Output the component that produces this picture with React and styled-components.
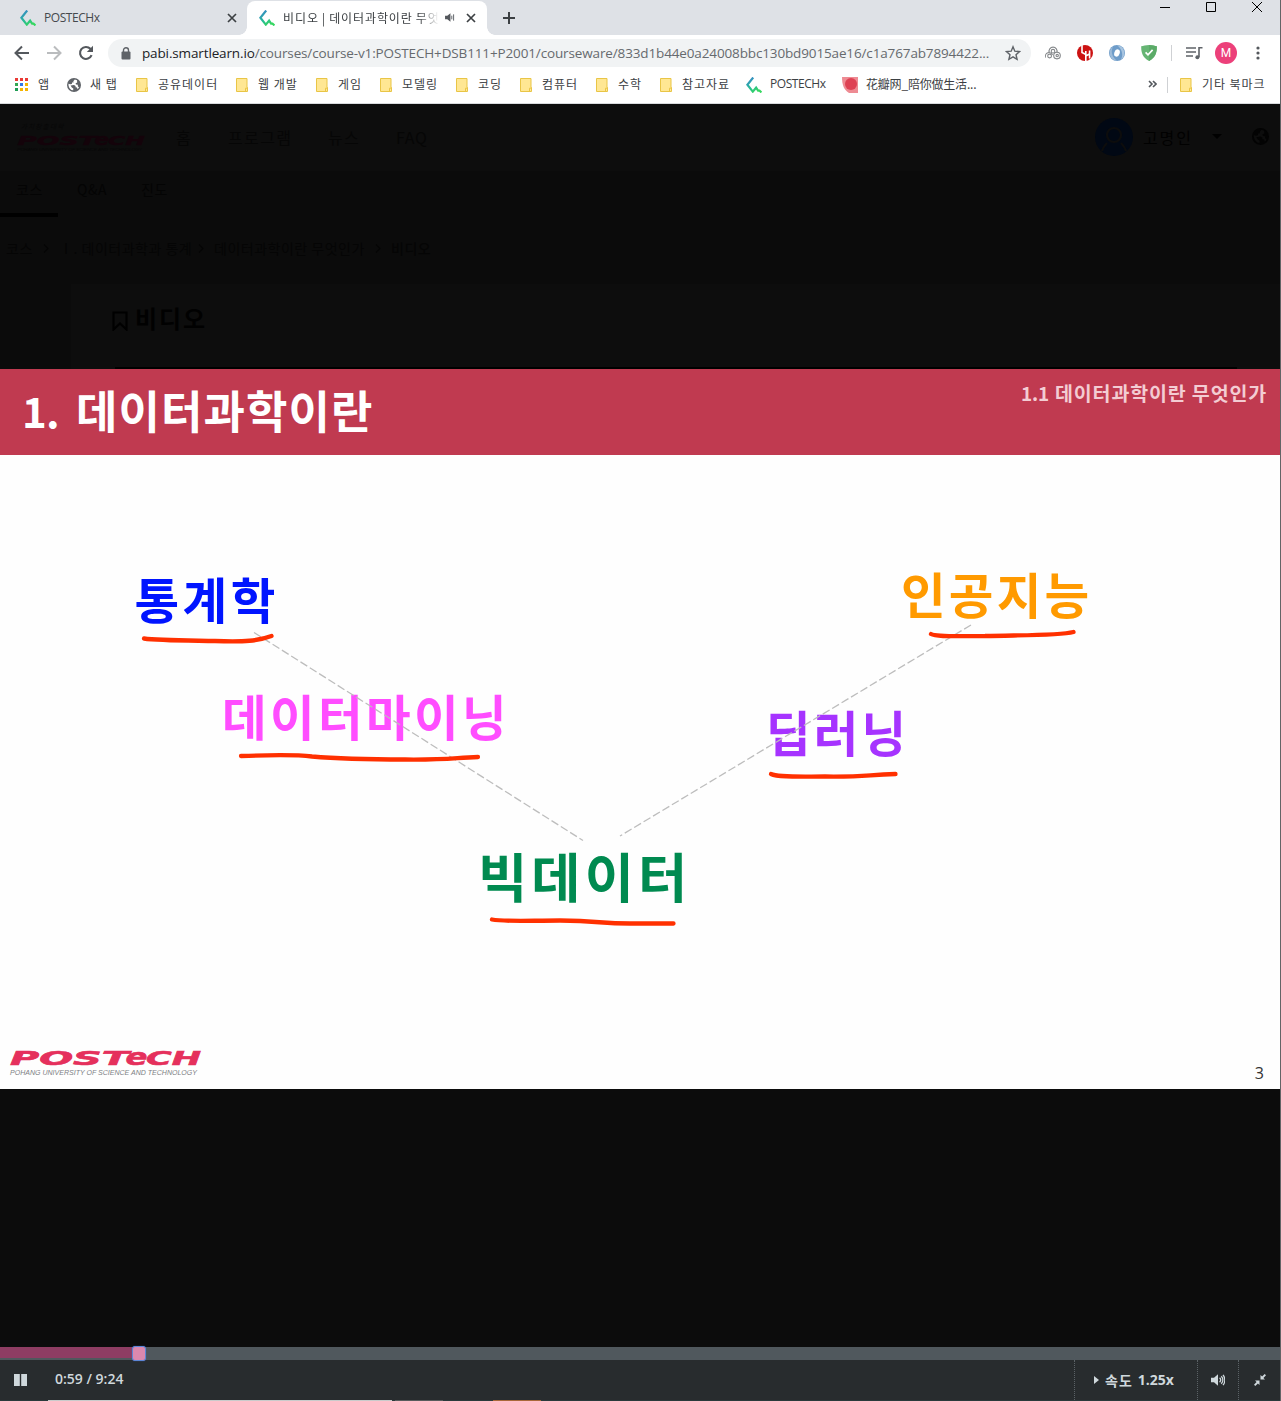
import React from "react";
import styled, { createGlobalStyle } from "styled-components";

const Global = createGlobalStyle`
  * { box-sizing: border-box; }
  body { margin: 0; background: #0c0c0c; overflow: hidden; }
`;

const UI_FONT = `"Open Sans", "Noto Sans", "Noto Sans CJK KR", "Noto Sans CJK SC", sans-serif`;
const KR_FONT = `"Noto Sans CJK KR", "Noto Sans CJK SC", sans-serif`;

const Window = styled.div`
  width: 1281px;
  height: 1401px;
  display: flex;
  flex-direction: column;
  border-right: 1px solid #636466;
  background: #0c0c0c;
  font-family: ${UI_FONT};
  overflow: hidden;
`;

/* ---------- tab strip ---------- */
const TabStrip = styled.div`
  height: 35px;
  flex: none;
  display: flex;
  background: #dee1e6;
`;
const Tab = styled.div`
  display: flex;
  align-items: center;
  position: relative;
  width: ${(p) => (p.$active ? 240 : 247)}px;
  height: ${(p) => (p.$active ? 34 : 35)}px;
  margin-top: ${(p) => (p.$active ? 1 : 0)}px;
  padding: ${(p) => (p.$active ? "0 11px 1px 12px" : "0 10px 0 20px")};
  background: ${(p) => (p.$active ? "#fff" : "transparent")};
  border-radius: 8px 8px 0 0;
  &::before, &::after {
    content: "";
    display: ${(p) => (p.$active ? "block" : "none")};
    position: absolute;
    bottom: 0;
    width: 8px;
    height: 8px;
  }
  &::before { left: -8px; background: radial-gradient(circle at 0 0, transparent 7.5px, #fff 8px); }
  &::after { right: -8px; background: radial-gradient(circle at 100% 0, transparent 7.5px, #fff 8px); }
`;
const TabTitle = styled.span`
  flex: 1;
  margin-left: 8px;
  white-space: nowrap;
  overflow: hidden;
  font: 12px/18px ${(p) => (p.$kr ? KR_FONT : UI_FONT)};
  letter-spacing: ${(p) => p.$ls || 0}px;
  word-spacing: ${(p) => (p.$kr ? -0.5 : 0)}px;
  color: ${(p) => (p.$kr ? "#3c4043" : "#45494d")};
  ${(p) => p.$kr && "mask-image: linear-gradient(90deg,#000 136px,transparent 156px);"}
`;
const TabIcons = styled.div`
  display: flex;
  align-items: center;
  gap: 11px;
  margin-left: 6px;
`;
const NewTab = styled.div`
  width: 44px;
  display: flex;
  align-items: center;
  justify-content: center;
`;
const WindowButtons = styled.div`
  margin-left: auto;
  display: flex;
  gap: 36px;
  padding: 2px 18px 0 0;
`;

/* ---------- toolbar ---------- */
const Toolbar = styled.div`
  height: 35px;
  flex: none;
  display: flex;
  align-items: center;
  background: #fff;
  padding: 1px 12px 0 14px;
`;
const NavButtons = styled.div`
  display: flex;
  gap: 16px;
  width: 94px;
`;
const Omnibox = styled.div`
  width: 923px;
  height: 28px;
  border-radius: 14px;
  background: #f1f3f4;
  display: flex;
  align-items: center;
  padding: 0 10px 0 13px;
`;
const Url = styled.div`
  flex: 1;
  width: 0;
  margin-left: 11px;
  font: 13.5px/20px ${UI_FONT};
  letter-spacing: ${(p) => p.$ls}px;
  color: #666a6e;
  white-space: nowrap;
  b { font-weight: 400; color: #202124; }
`;
const Extensions = styled.div`
  display: flex;
  align-items: center;
  margin-left: 14px;
  gap: 16px;
`;
const Rule = styled.i`
  width: 1px;
  height: 16px;
  background: #cfd1d4;
  margin: ${(p) => p.$m || "0"};
`;
const Avatar = styled.div`
  width: 22px;
  height: 22px;
  margin-left: -4px;
  border-radius: 50%;
  background: #ec407a;
  color: #fff;
  font: 12px/22px Roboto, sans-serif;
  text-align: center;
`;

/* ---------- bookmarks ---------- */
const Bookmarks = styled.div`
  height: 34px;
  flex: none;
  display: flex;
  align-items: center;
  background: #fff;
  border-bottom: 1px solid #d8dadd;
  padding: 0 0 6px 14px;
`;
const Bookmark = styled.div`
  width: ${(p) => p.$w}px;
  flex: none;
  display: flex;
  align-items: center;
  font: 12px/18px ${(p) => (p.$latin ? UI_FONT : KR_FONT)};
  letter-spacing: ${(p) => p.$ls ?? 1}px;
  color: #3c4043;
  white-space: nowrap;
  svg { flex: none; margin-top: 2px; margin-right: ${(p) => p.$gap ?? 10}px; }
`;
const More = styled.div`
  margin-left: auto;
  display: flex;
  align-items: center;
`;

/* ---------- dimmed page ---------- */
const Dimmed = styled.div`
  height: 265px;
  flex: none;
  display: flex;
  flex-direction: column;
  background: #0b0b0b;
  font-family: ${KR_FONT};
  color: #060606;
`;
const SiteNav = styled.div`
  height: 67px;
  display: flex;
  align-items: center;
  background: #0d0d0d;
  padding: 0 11px 2px 16px;
  font-size: 16px;
`;
const SiteLogo = styled.div`
  width: 160px;
  padding-top: 22px;
`;
const NavLink = styled.span`
  width: ${(p) => p.$w}px;
  white-space: nowrap;
  letter-spacing: ${(p) => p.$ls ?? 1.4}px;
`;
const Account = styled.div`
  margin-left: auto;
  display: flex;
  align-items: center;
  color: #010101;
  > svg:nth-of-type(2) { margin-right: 30px; }
`;
const AccountName = styled.span`
  width: 79px;
  padding-left: 10px;
  letter-spacing: 1.9px;
`;
const CourseTabs = styled.div`
  height: 46px;
  display: flex;
  font-size: 14px;
`;
const CourseTab = styled.div`
  width: ${(p) => p.$w}px;
  height: 46px;
  padding: 8px 0 0 ${(p) => p.$pl}px;
  border-bottom: ${(p) => (p.$on ? "4px solid #000" : "0")};
  letter-spacing: 0.5px;
  white-space: nowrap;
  color: #040404;
`;
const Crumbs = styled.div`
  height: 67px;
  display: flex;
  align-items: center;
  padding: 0 0 5px 6px;
  font-size: 14px;
  letter-spacing: 0.5px;
  white-space: nowrap;
  color: #050505;
`;
const Crumb = styled.span`
  width: ${(p) => p.$w}px;
  font-weight: ${(p) => (p.$b ? 500 : 400)};
  display: flex;
  align-items: center;
  justify-content: space-between;
  svg { margin-right: 10px; }
`;
const Card = styled.div`
  flex: 1;
  margin-left: 71px;
  background: #0d0d0d;
  padding: 18px 43px 0 40px;
  display: flex;
  flex-direction: column;
  justify-content: space-between;
`;
const CardTitle = styled.div`
  display: flex;
  align-items: center;
  gap: 6px;
  font: 700 24px/32px ${KR_FONT};
  letter-spacing: 1.9px;
  color: #010101;
  svg { margin-top: 6px; }
`;
const VideoEdge = styled.div`
  height: 2px;
  margin-left: 4px;
  background: #000;
`;

/* ---------- slide ---------- */
const Slide = styled.div`
  height: 720px;
  flex: none;
  position: relative;
  background: #fefefe;
  font-family: ${KR_FONT};
`;
const SlideHeader = styled.div`
  height: 86px;
  background: #c03a50;
  display: flex;
  justify-content: space-between;
  padding: 0 13px 0 22px;
`;
const Heading = styled.div`
  display: flex;
  font: 700 45px/81px ${KR_FONT};
  letter-spacing: 1.1px;
  color: #fff;
  white-space: pre;
  b { width: 54px; font-weight: 700; font-size: 42px; letter-spacing: -0.8px; }
`;
const SubHeading = styled.div`
  display: flex;
  font: 700 19.5px/48px ${KR_FONT};
  letter-spacing: 0.85px;
  color: #f3ccd3;
  white-space: pre;
  b { width: 34px; font-weight: 700; font-size: 19px; letter-spacing: -0.2px; }
`;
const Term = styled.div`
  position: absolute;
  left: ${(p) => p.$x}px;
  top: ${(p) => p.$y}px;
  font: 700 ${(p) => p.$size || 48.5}px/60px ${KR_FONT};
  letter-spacing: ${(p) => p.$ls}px;
  color: ${(p) => p.$c};
  white-space: nowrap;
`;
const Ink = styled.svg`
  position: absolute;
  inset: 0;
`;
const SlideLogo = styled.div`
  position: absolute;
  left: 8px;
  top: 676.5px;
`;
const PageNo = styled.div`
  position: absolute;
  right: 16px;
  bottom: 5px;
  font: 16px/22px ${UI_FONT};
  color: #333;
`;

/* ---------- player ---------- */
const Gap = styled.div`
  flex: 1;
  background: #0c0c0c;
`;
const Progress = styled.div`
  height: 13px;
  flex: none;
  display: flex;
  background: #50585d;
`;
const Played = styled.div`
  height: 11px;
  background: #8e3d63;
`;
const Knob = styled.div`
  width: 14px;
  height: 15px;
  flex: none;
  margin: -1px 0 -1px -1px;
  z-index: 1;
  border: 1px solid #5c86d6;
  border-radius: 3px;
  background: #dc88ae;
  box-shadow: 0 0 1px #3f6fd0;
`;
const Controls = styled.div`
  height: 40px;
  flex: none;
  display: flex;
  background: #282c2e;
  color: #cfd8dc;
`;
const Play = styled.div`
  width: 55px;
  display: flex;
  align-items: center;
  padding-left: 14px;
`;
const Time = styled.div`
  flex: 1;
  font: 600 14px/38px ${UI_FONT};
  letter-spacing: 0;
`;
const Control = styled.div`
  width: ${(p) => p.$w}px;
  border-left: 1px dotted #5b6266;
  display: flex;
  align-items: center;
  justify-content: center;
  padding-right: ${(p) => p.$pr || 0}px;
  font: 700 14px/38px ${UI_FONT};
  letter-spacing: 0;
  white-space: nowrap;
`;
const Speed = styled.span`
  margin: 0 5px 0 6px;
  font: 700 14px/36px ${KR_FONT};
  letter-spacing: 1px;
`;
const Taskbar = styled.div`
  height: 1px;
  flex: none;
  display: flex;
  background: #2a3a3b;
`;
const Task = styled.i`
  width: ${(p) => p.$w}px;
  margin-left: ${(p) => p.$ml}px;
  background: ${(p) => p.$c};
`;

/* ---------- drawings ---------- */
const Swirl = ({ id }) => (
  <svg width="16" height="16" viewBox="0 0 16 16" fill="none">
    <defs>
      <linearGradient id={id} x1="0" y1="0" x2="0.6" y2="1">
        <stop offset="0" stopColor="#3b7fd0" />
        <stop offset=".55" stopColor="#27b89a" />
        <stop offset="1" stopColor="#35d75f" />
      </linearGradient>
    </defs>
    <path d="M7.2.5 1.4 7.8l5.4 6.8 3.3-3.9 2 3h1.400l2 1.700" stroke={`url(#${id})`} strokeWidth="2.2" />
  </svg>
);
const Close = () => (
  <svg width="10" height="10" viewBox="0 0 10 10" stroke="#3c4043" strokeWidth="1.7">
    <path d="M1 1l8 8M9 1 1 9" />
  </svg>
);
const Folder = () => (
  <svg width="12" height="14" viewBox="0 0 12 14">
    <path d="M.5.5h10.5v9h.5v4H.5z" fill="#ffe793" stroke="#e9c546" />
    <path d="M9.5 13.5v-3.3h2" fill="none" stroke="#e9c546" />
  </svg>
);
const Apps = () => (
  <svg width="14" height="14" viewBox="0 0 14 14">
    {["#ea3a35", "#ea3a35", "#ea3a35", "#34a853", "#3178e8", "#f5b400", "#1f9d55", "#f5b400", "#f5b400"].map((c, i) => (
      <rect key={i} x={1 + (i % 3) * 5} y={Math.floor(i / 3) * 5} width="3" height="3" fill={c} />
    ))}
  </svg>
);
const Globe = ({ s = 14, c = "#5f6368", land = "#fff" }) => (
  <svg width={s} height={s} viewBox="0 0 14 14">
    <circle cx="7" cy="7" r="7" fill={c} />
    <path d="M7.8 1.400 6.300 3.200 6.600 4.400 5 4.600 4.900 6 3.200 6.300 1.500 5.800C1.200 8.400 2.300 10.600 4.400 11.900L6.200 12.300 6.300 10.400 4.800 9.400 3.600 7.600 7 7 8.600 8 8.500 9.200 10 9.400 10.600 11.300 12 9.600 10.800 8.200 10.900 6.800 9 6.600 8.600 5.200 10.200 4.600 10 2.200z" fill={land} />
  </svg>
);
const Speaker = ({ s, c }) => (
  <svg width={s} height={s} viewBox="0 0 14 14" fill="none" stroke={c} strokeWidth="1.3">
    <path d="M0 4.8h3L7 1.3v11.4L3 9.2H0z" fill={c} stroke="none" />
    <path d="M8.6 4.8c1.2 1.2 1.2 3.2 0 4.4M10.3 3.2c2.1 2.1 2.1 5.5 0 7.6M12 1.8c2.5 2.9 2.5 7.5 0 10.4" />
  </svg>
);
const TabSpeaker = () => (
  <svg width="10" height="9" viewBox="0 0 11 10" fill="none" stroke="#54585d">
    <path d="M0 3h2.500L6 .3v9.400L2.500 7H0z" fill="#54585d" stroke="none" />
    <path d="M7.500 3v4M9.500 1.500v7" />
  </svg>
);
const Wordmark = ({ w, c, sub, korean }) => (
  <svg width={w} height={w * 0.2} viewBox="0 0 195 39" overflow="visible">
    {korean && (
      <text x="7" y="-4" fontFamily="Noto Sans CJK KR" fontSize="10" fontStyle="italic" fill={sub} textLength="64">가치창출대학</text>
    )}
    <g fontFamily="DejaVu Sans" fontWeight="700" fontStyle="italic" fill={c} stroke={c} strokeWidth=".6">
      <text x="2" y="19" fontSize="18.6" textLength="119" lengthAdjust="spacingAndGlyphs">POST</text>
      <text x="117.5" y="19" fontSize="23.5" textLength="22" lengthAdjust="spacingAndGlyphs">e</text>
      <text x="138" y="19" fontSize="18.6" textLength="55" lengthAdjust="spacingAndGlyphs">CH</text>
    </g>
    <text x="2" y="28.5" fontFamily="Liberation Sans" fontStyle="italic" fontSize="6.5" fill={sub} textLength="187" lengthAdjust="spacingAndGlyphs">
      POHANG UNIVERSITY OF SCIENCE AND TECHNOLOGY
    </text>
  </svg>
);
const Chevron = () => (
  <svg width="6" height="9" viewBox="0 0 6 9" fill="none" stroke="#050505" strokeWidth="1.1">
    <path d="M1 .5l4 4-4 4" />
  </svg>
);

const FOLDERS = [
  ["공유데이터", 100], ["웹 개발", 80], ["게임", 64], ["모델링", 76],
  ["코딩", 64], ["컴퓨터", 76], ["수학", 64], ["참고자료", 86],
];

export default function App() {
  return (
    <>
      <Global />
      <Window>
        <TabStrip>
          <Tab>
            <Swirl id="s1" />
            <TabTitle $ls={-0.45}>POSTECHx</TabTitle>
            <Close />
          </Tab>
          <Tab $active>
            <Swirl id="s2" />
            <TabTitle $kr $ls={0.9}>비디오 | 데이터과학이란 무엇인가</TabTitle>
            <TabIcons>
              <TabSpeaker />
              <Close />
            </TabIcons>
          </Tab>
          <NewTab>
            <svg width="12" height="12" viewBox="0 0 12 12" stroke="#3c4043" strokeWidth="2"><path d="M6 0v12M0 6h12" /></svg>
          </NewTab>
          <WindowButtons>
            <svg width="10" height="11" viewBox="0 0 10 11" stroke="#000"><path d="M0 5.5h10" /></svg>
            <svg width="10" height="10" viewBox="0 0 10 10" stroke="#000" fill="none"><path d="M.5.5h9v9h-9z" /></svg>
            <svg width="10" height="10" viewBox="0 0 10 10" stroke="#000"><path d="M0 0l10 10M10 0 0 10" /></svg>
          </WindowButtons>
        </TabStrip>

        <Toolbar>
          <NavButtons>
            <svg width="16" height="16" viewBox="0 0 16 16" fill="none" stroke="#54585d" strokeWidth="2"><path d="M15 8H2M8 1.5 1.5 8 8 14.5" /></svg>
            <svg width="16" height="16" viewBox="0 0 16 16" fill="none" stroke="#babcbe" strokeWidth="2"><path d="M1 8h13M8 1.5 14.5 8 8 14.5" /></svg>
            <svg width="16" height="16" viewBox="0 0 16 16" fill="none" stroke="#54585d" strokeWidth="2.1"><path d="M13.6 10.2A6 6 0 1 1 12.4 3.8L14 5.4" /><path d="M15 .8V7H8.8z" fill="#54585d" stroke="none" /></svg>
          </NavButtons>
          <Omnibox>
            <svg width="10" height="13" viewBox="0 0 10 13"><rect x=".5" y="4.5" width="9" height="8" rx="1" fill="#5f6368" /><path d="M2.5 5V3.2a2.5 2.5 0 0 1 5 0V5" fill="none" stroke="#5f6368" strokeWidth="1.4" /></svg>
            <Url $ls={-0.135}><b>pabi.smartlearn.io</b>/courses/course-v1:POSTECH+DSB111+P2001/courseware/833d1b44e0a24008bbc130bd9015ae16/c1a767ab7894422...</Url>
            <svg width="16" height="16" viewBox="0 0 16 16" fill="none" stroke="#5f6368" strokeWidth="1.4"><path d="M8 1.8l1.8 4.4 4.8.4-3.6 3.1 1.1 4.7L8 11.9l-4.1 2.5L5 9.7 1.4 6.6l4.8-.4z" /></svg>
          </Omnibox>
          <Extensions>
            <svg width="16" height="14" viewBox="0 0 16 14" fill="none" stroke="#85888b" strokeWidth="1.1"><path d="M4.300 6.500A4 4 0 1 1 11.800 6.500" /><circle cx="8" cy="5.200" r="1.800" /><circle cx="12" cy="9.600" r="3.300" /><circle cx="12.200" cy="9.600" r="1.200" /><path d="M.6 11.500A3.600 3.600 0 0 1 7.500 9" /><circle cx="4.600" cy="10" r="1.900" /></svg>
            <svg width="16" height="16" viewBox="0 0 16 16"><circle cx="8" cy="8" r="8" fill="#cc1212" /><path d="M5 0v7.500l4 2M8.800 6v10M8.800 11l3.600-2M12.600 5.500v8" fill="none" stroke="#fff" strokeWidth="1.600" /></svg>
            <svg width="16" height="16" viewBox="0 0 16 16"><circle cx="8" cy="8" r="8" fill="#6e9cc9" /><path d="M8 .3a7.7 7.7 0 0 1 4 14C15 9 12 3 8 .3z" fill="#a7c4e0" /><path d="M8 15.7A7.7 7.7 0 0 1 4 1.7C1 7 4 13 8 15.7z" fill="#9dbbd9" /><ellipse cx="8" cy="8" rx="2.700" ry="3.800" fill="#fff" transform="rotate(18 8 8)" /></svg>
            <svg width="16" height="16" viewBox="0 0 16 16"><path d="M8 0c3 .2 6 .8 7.8 1.3C16 8 14 13 8 16 2 13 0 8 .2 1.3 2 .8 5 .2 8 0z" fill="#66b574" /><path d="M8 0c3 .2 6 .8 7.8 1.3C16 8 14 13 8 16z" fill="#5bab68" /><path d="M4.6 7.3 7 9.8l4.6-5" fill="none" stroke="#fff" strokeWidth="1.7" /></svg>
            <Rule $m="0 -2px" />
            <svg width="17" height="14" viewBox="0 0 17 14" fill="none" stroke="#5f6368" strokeWidth="1.6"><path d="M0 2h10M0 6h10M0 10h7M13 11V1.8h3.5" /><circle cx="11.4" cy="11.3" r="2" fill="#5f6368" stroke="none" /></svg>
            <Avatar>M</Avatar>
            <svg width="12" height="14" viewBox="0 0 12 14" fill="#54585d"><circle cx="5" cy="2" r="1.6" /><circle cx="5" cy="7" r="1.6" /><circle cx="5" cy="12" r="1.6" /></svg>
          </Extensions>
        </Toolbar>

        <Bookmarks>
          <Bookmark $w={53}><Apps />앱</Bookmark>
          <Bookmark $w={69} $gap={9}><Globe />새 탭</Bookmark>
          {FOLDERS.map(([name, w]) => (
            <Bookmark key={name} $w={w}><Folder />{name}</Bookmark>
          ))}
          <Bookmark $w={96} $latin $ls={-0.45} $gap={8}><Swirl id="s3" />POSTECHx</Bookmark>
          <Bookmark $w={140} $ls={-0.2} $gap={8}>
            <svg width="16" height="16" viewBox="0 0 16 16"><path d="M0 0h16v16H7C2 13 0 8 0 0z" fill="#ee8b93" /><circle cx="9" cy="7" r="6" fill="#de4153" /></svg>
            花瓣网_陪你做生活...
          </Bookmark>
          <More>
            <svg width="9" height="8" viewBox="0 0 9 8" fill="none" stroke="#54585d" strokeWidth="1.6"><path d="M1 1l3 3-3 3M5 1l3 3-3 3" /></svg>
            <Rule $m="2px 12px 0 10px" />
            <Bookmark $w={100} $ls={0.95}><Folder />기타 북마크</Bookmark>
          </More>
        </Bookmarks>

        <Dimmed>
          <SiteNav>
            <SiteLogo><Wordmark w={130} c="#14030a" sub="#070707" korean /></SiteLogo>
            <NavLink $w={52}>홈</NavLink>
            <NavLink $w={100}>프로그램</NavLink>
            <NavLink $w={68}>뉴스</NavLink>
            <NavLink $w={40} $ls={0.7}>FAQ</NavLink>
            <Account>
              <svg width="38" height="38" viewBox="0 0 38 38" fill="none"><circle cx="19" cy="19" r="19" fill="#010814" /><circle cx="19" cy="17" r="7" stroke="#0d0d0d" strokeWidth="2.2" /><path d="M7 33c1-4 3-6 5-8M31 33c-1-4-3-6-5-8" stroke="#0d0d0d" strokeWidth="2.2" /></svg>
              <AccountName>고명인</AccountName>
              <svg width="10" height="6" viewBox="0 0 10 6"><path d="M0 0h10L5 5z" fill="#000" /></svg>
              <Globe s={17} c="#030303" land="#0d0d0d" />
            </Account>
          </SiteNav>
          <CourseTabs>
            <CourseTab $w={58} $pl={16} $on>코스</CourseTab>
            <CourseTab $w={64} $pl={19}>Q&amp;A</CourseTab>
            <CourseTab $w={64} $pl={19}>진도</CourseTab>
          </CourseTabs>
          <Crumbs>
            <Crumb $w={53}>코스<Chevron /></Crumb>
            <Crumb $w={155}>Ⅰ. 데이터과학과 통계<Chevron /></Crumb>
            <Crumb $w={177}>데이터과학이란 무엇인가<Chevron /></Crumb>
            <Crumb $w={50} $b>비디오</Crumb>
          </Crumbs>
          <Card>
            <CardTitle>
              <svg width="18" height="20" viewBox="0 0 18 20" fill="none" stroke="#000" strokeWidth="2.2"><path d="M2.5 1.5h13v17L9 12.5l-6.5 6z" /></svg>
              비디오
            </CardTitle>
            <VideoEdge />
          </Card>
        </Dimmed>

        <Slide>
          <SlideHeader>
            <Heading><b>1.</b>데이터과학이란</Heading>
            <SubHeading><b>1.1</b>데이터과학이란 무엇인가</SubHeading>
          </SlideHeader>
          <Term $x={134.5} $y={199} $ls={3.5} $c="#0014ff">통계학</Term>
          <Term $x={222} $y={316} $ls={3.4} $c="#ff4dff">데이터마이닝</Term>
          <Term $x={901} $y={194} $ls={3.2} $c="#ff9a00">인공지능</Term>
          <Term $x={766} $y={332} $ls={3.1} $c="#a633ff">딥러닝</Term>
          <Term $x={478} $y={476} $ls={4.1} $size={53.5} $c="#008a50">빅데이터</Term>
          <Ink width="1280" height="720" viewBox="0 369 1280 720" fill="none">
            <g stroke="#bdbdbd" strokeWidth="1.3" strokeDasharray="8 3">
              <path d="M254 632.500 583 840.500" />
              <path d="M971 625 620 836" />
            </g>
            <g stroke="#ff3000" strokeWidth="4.300" strokeLinecap="round" strokeLinejoin="round">
              <path d="M144 638.500C158 640.500 190 640.500 215 641C245 642 258 641 271.500 636" />
              <path d="M241 756C270 755 295 754.500 312 756.500C340 759 370 759.500 405 759.500C450 760 455 757.500 478 757" />
              <path d="M931 634C936 637 955 636 985 636C1030 635 1060 635.500 1073.500 632" />
              <path d="M771 774C778 777.500 800 776.500 825 776.500C865 777 865 775 895.500 774" />
              <path d="M492 919.500C505 922 530 920.500 560 920.500C600 921 600 923.500 630 923.500L673.500 923.500" />
            </g>
          </Ink>
          <SlideLogo><Wordmark w={195} c="#e5305c" sub="#7d8084" /></SlideLogo>
          <PageNo>3</PageNo>
        </Slide>

        <Gap />
        <Progress>
          <Played style={{ width: `${(59 / 564) * 100 - 0.08}%` }} />
          <Knob />
        </Progress>
        <Controls>
          <Play><svg width="13" height="12" viewBox="0 0 13 12" fill="#cfd8dc"><path d="M0 0h5.800v12H0zM7.200 0H13v12H7.200z" /></svg></Play>
          <Time>0:59 / 9:24</Time>
          <Control $w={123} $pr={4}>
            <svg width="5" height="8" viewBox="0 0 5 8" fill="#cfd8dc"><path d="M0 0l5 4-5 4z" /></svg>
            <Speed>속도</Speed>1.25x
          </Control>
          <Control $w={41}><Speaker s={14} c="#cfd8dc" /></Control>
          <Control $w={42}>
            <svg width="12" height="12" viewBox="0 0 12 12" fill="#cfd8dc"><path d="M6.500 5.500V1l1.600 1.600L10.700 0 12 1.300 9.400 3.900 11 5.500zM5.500 6.500V11L3.900 9.400 1.300 12 0 10.700 2.600 8.100 1 6.500z" /></svg>
          </Control>
        </Controls>
        <Taskbar>
          <Task $ml={48} $w={344} $c="#c9cbcb" />
          <Task $ml={3} $w={48} $c="#585c5d" />
          <Task $ml={50} $w={48} $c="#a9683a" />
        </Taskbar>
      </Window>
    </>
  );
}
